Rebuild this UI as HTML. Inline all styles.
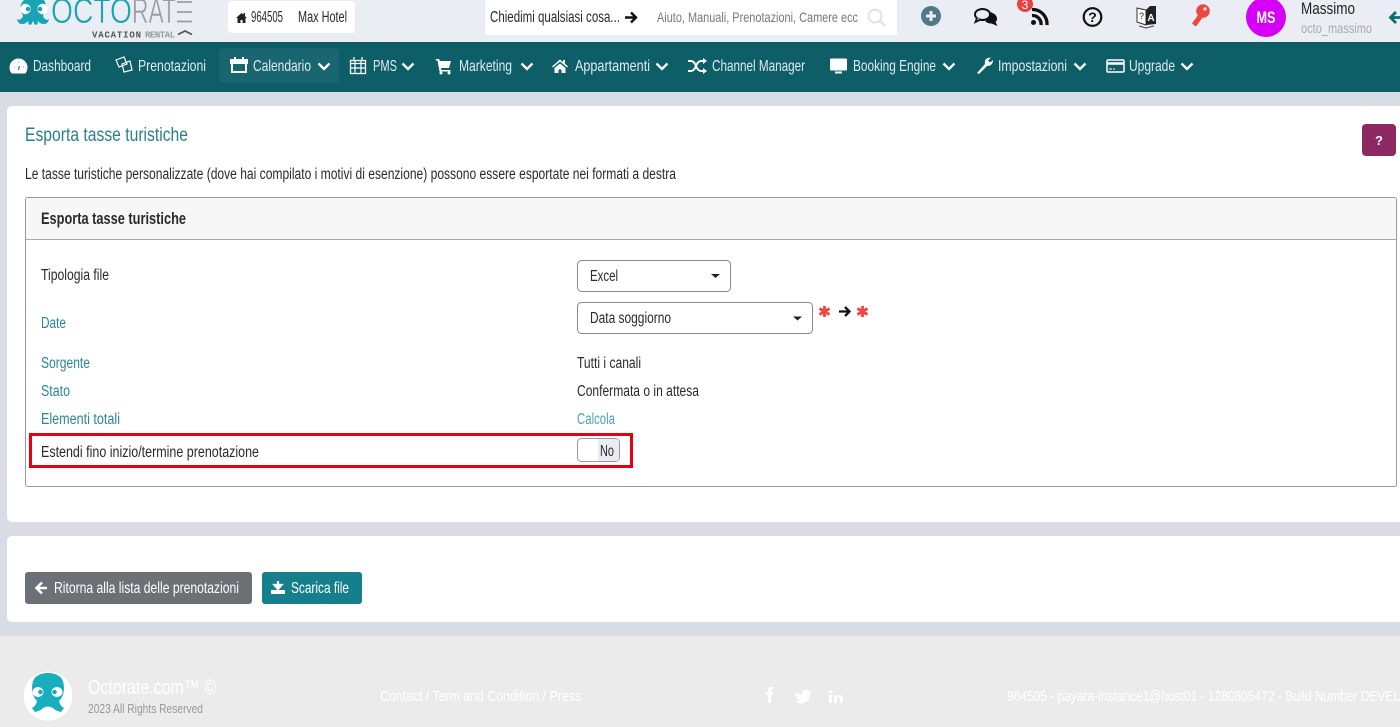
<!DOCTYPE html>
<html><head><meta charset="utf-8"><style>
html,body{margin:0;padding:0;background:#d9dce5}
svg{display:block;font-family:"Liberation Sans Narrow","Liberation Sans",sans-serif}
.n{fill:#dfecee;font-size:16px}
.d{fill:#2a2a2a;font-size:15.5px}
.t{fill:#2b8792;font-size:15.5px}
</style></head><body>
<svg width="1400" height="727" viewBox="0 0 1400 727" xmlns="http://www.w3.org/2000/svg">
<defs>
<path id="chev" d="M-5.500-2.500 0 3 5.500-2.500" fill="none" stroke="#fff" stroke-width="2.300"/>
</defs>
<rect width="1400" height="727" fill="#d9dce5"/>
<rect width="1400" height="42" fill="#eaedf3"/>
<rect y="42" width="1400" height="50" fill="#0e5e68"/>

<!-- logo -->
<path d="M24 0h20q3 5 1 11l-2 5q1 3 4 4l2-1q-1 5-5 5-4 0-6-3-1 2 0 3l-3 1-2-4-2 4-3-1q1-1 0-3-2 3-6 3-4 0-5-5l2 1q3-1 4-4l-2-5q-2-6 3-11z" fill="#17a5b5"/>
<circle cx="25.500" cy="9" r="5.200" fill="#fff"/><circle cx="42.500" cy="9" r="5.200" fill="#fff"/>
<circle cx="28" cy="9" r="2.300" fill="#17a5b5"/><circle cx="40" cy="9" r="2.300" fill="#17a5b5"/>
<text x="51" y="23" font-size="35" fill="#17a5b5" stroke="#eaedf3" stroke-width=".5" textLength="81" lengthAdjust="spacingAndGlyphs" style="font-family:'Liberation Sans'">OCTO</text>
<text x="132" y="23" font-size="35" fill="#9a9ea4" stroke="#eaedf3" stroke-width=".5" textLength="44" lengthAdjust="spacingAndGlyphs" style="font-family:'Liberation Sans'">RAT</text>
<path d="M177 2h15M177 12h15M177 21.500h15" stroke="#9a9ea4" stroke-width="1.800"/>
<text x="92" y="37.500" font-size="9" font-weight="700" fill="#555" textLength="49" lengthAdjust="spacing" style="font-family:'Liberation Mono'">VACATION</text>
<text x="145" y="37.500" font-size="9" font-weight="700" fill="#999" textLength="30" lengthAdjust="spacing" style="font-family:'Liberation Mono'">RENTAL</text>
<path d="M178 34.500l7-3.500 7 3.500" fill="none" stroke="#555" stroke-width="1.700"/>

<!-- hotel -->
<rect x="228" y="1" width="127" height="32" rx="4" fill="#fff"/>
<path d="M236 18l5.500-5 2 1.800V13h1.500v3.200l2 1.800h-1.500v5h-3v-3h-2v3h-3v-5z" fill="#222"/>
<text x="251" y="22" class="d" textLength="32" lengthAdjust="spacingAndGlyphs">964505</text>
<text x="298" y="22" class="d" textLength="49" lengthAdjust="spacingAndGlyphs">Max Hotel</text>

<!-- search -->
<rect x="485" y="0" width="412" height="35" fill="#fff"/>
<text x="490" y="22" class="d" textLength="130" lengthAdjust="spacingAndGlyphs">Chiedimi qualsiasi cosa...</text>
<path d="M625 17.500h10M631 12.500l5 5-5 5" fill="none" stroke="#111" stroke-width="2.400"/>
<text x="657" y="22" font-size="14" fill="#777" textLength="201" lengthAdjust="spacingAndGlyphs">Aiuto, Manuali, Prenotazioni, Camere ecc</text>
<circle cx="875" cy="16" r="6.500" fill="none" stroke="#dfe2e4" stroke-width="2"/>
<path d="M880 21l5 5" stroke="#dfe2e4" stroke-width="2.500"/>

<!-- top icons -->
<circle cx="931" cy="16" r="10" fill="#4f7a87"/>
<path d="M931 11v10M926 16h10" stroke="#eaedf3" stroke-width="3"/>
<path d="M990 12q7 2 7 7 0 2-1.500 3l2 4-6-2.500q-4 0-6-2z" fill="#111"/>
<ellipse cx="982.500" cy="14.500" rx="7.500" ry="5.500" fill="#eaedf3" stroke="#111" stroke-width="2"/>
<path d="M977 18l-1.500 4 5-2.500" fill="#eaedf3" stroke="#111" stroke-width="1.800"/>
<circle cx="1033.500" cy="22.500" r="2.500" fill="#111"/>
<path d="M1032 15.500a8.500 8.500 0 0 1 9 9.500M1032 9.500a14.500 14.500 0 0 1 15 15.500" fill="none" stroke="#111" stroke-width="3.300"/>
<circle cx="1025" cy="4" r="8" fill="#ea4040"/>
<text x="1025" y="9" font-size="12" fill="#fff" text-anchor="middle">3</text>
<circle cx="1092.500" cy="17" r="8.800" fill="none" stroke="#111" stroke-width="2.200"/>
<text x="1092.500" y="22" font-size="14" font-weight="700" fill="#111" text-anchor="middle" style="font-family:'Liberation Sans'">?</text>
<path d="M1137 8l9 2v15l-9-3z" fill="#fff" stroke="#333"/>
<path d="M1146 10l4-4 6 0v18l-10 1z" fill="#222"/>
<path d="M1139 26l7 2 8-2" fill="none" stroke="#444"/>
<text x="1151" y="21" font-size="10" font-weight="700" fill="#fff" text-anchor="middle">A</text>
<text x="1141.500" y="19" font-size="9" fill="#222" text-anchor="middle">?</text>
<path d="M1194 25l8-11" stroke="#ef4545" stroke-width="5"/>
<circle cx="1203" cy="11" r="6.800" fill="#ef4545"/><circle cx="1205" cy="9" r="1.600" fill="#eaedf3"/>

<circle cx="1266" cy="17" r="20" fill="#d500f5"/>
<text x="1256.500" y="23" font-size="17" fill="#fff" textLength="19" lengthAdjust="spacingAndGlyphs" font-weight="700">MS</text>
<text x="1301" y="14" font-size="17" fill="#222" textLength="54" lengthAdjust="spacingAndGlyphs">Massimo</text>
<text x="1301" y="33" font-size="14" fill="#aaa" textLength="71" lengthAdjust="spacingAndGlyphs">octo_massimo</text>
<path d="M1400 17.500h-9M1396 12l-5.500 5.500 5.500 5.500" fill="none" stroke="#0e6c78" stroke-width="2.800"/>

<!-- nav -->
<rect x="219" y="48" width="120" height="35" rx="3" fill="#1a6670"/>
<path d="M12 73a8.500 8.500 0 1 1 13 0z" fill="#fff" stroke="#fff"/><path d="M18.500 70l1-4M14 67h.5M23 67h.5M18.500 62v.5" stroke="#0e5e68" stroke-width="1"/>
<text x="33" y="71" class="n" textLength="58" lengthAdjust="spacingAndGlyphs">Dashboard</text>
<path d="M116 60l8-3 3 7-8 3zM122 64l8-3 2 9-8 2z" fill="none" stroke="#fff" stroke-width="1.200"/>
<text x="138" y="71" class="n" textLength="68" lengthAdjust="spacingAndGlyphs">Prenotazioni</text>
<rect x="232" y="60" width="14" height="12" fill="none" stroke="#fff" stroke-width="2"/><path d="M231 60h16v3h-16zM235 57v3M243 57v3" stroke="#fff" stroke-width="2" fill="#fff"/>
<text x="253" y="71" class="n" textLength="58" lengthAdjust="spacingAndGlyphs">Calendario</text>
<use href="#chev" x="324" y="66"/>
<rect x="350.500" y="60.500" width="15" height="13" fill="none" stroke="#fff" stroke-width="1.300"/><path d="M350 63.500h16M354 57v4M362 57v4M355 61v12M361 61v12M351 68h14" stroke="#fff" stroke-width="1.200" fill="none"/>
<text x="373" y="71" class="n" textLength="24" lengthAdjust="spacingAndGlyphs">PMS</text>
<use href="#chev" x="408" y="66"/>
<path d="M436 59h3l1 2h11l-2 7h-8l.5 2h9v1.500h-11l-2-11h-2z" fill="#fff"/><circle cx="441" cy="73" r="1.500" fill="#fff"/><circle cx="449" cy="73" r="1.500" fill="#fff"/>
<text x="459" y="71" class="n" textLength="53" lengthAdjust="spacingAndGlyphs">Marketing</text>
<use href="#chev" x="527" y="66"/>
<path d="M552 66.500l8-7 3 2.600V60h2v3.800l3 2.700-1 1-7-6-7 6zM554.500 68l5.500-4.500 5.500 4.500v5h-4v-3.500h-3V73h-4z" fill="#fff"/>
<text x="575" y="71" class="n" textLength="75" lengthAdjust="spacingAndGlyphs">Appartamenti</text>
<use href="#chev" x="662" y="66"/>
<path d="M688 61h3q3 0 5 5t5 5h3M688 71h3q3 0 5-5t5-5h3" fill="none" stroke="#fff" stroke-width="1.900"/><path d="M703 58l4 3-4 3zM703 68l4 3-4 3z" fill="#fff"/>
<text x="712" y="71" class="n" textLength="93" lengthAdjust="spacingAndGlyphs">Channel Manager</text>
<rect x="830" y="58.500" width="17" height="12" rx="1" fill="#fff"/><path d="M835 72.500h7" stroke="#fff" stroke-width="2"/>
<text x="853" y="71" class="n" textLength="83" lengthAdjust="spacingAndGlyphs">Booking Engine</text>
<use href="#chev" x="949" y="66"/>
<path d="M977 73l8-9q-1-5 3-6l3-.5-3 3 2 2 3-2.500q0 6-6 6l-8 8z" fill="#fff"/>
<text x="998" y="71" class="n" textLength="69" lengthAdjust="spacingAndGlyphs">Impostazioni</text>
<use href="#chev" x="1080" y="66"/>
<rect x="1107" y="60" width="17" height="12" rx="1" fill="none" stroke="#fff" stroke-width="1.500"/><path d="M1107 63.500h17" stroke="#fff" stroke-width="2.500"/><path d="M1109 69h3M1113 69h2" stroke="#fff"/>
<text x="1129" y="71" class="n" textLength="46" lengthAdjust="spacingAndGlyphs">Upgrade</text>
<use href="#chev" x="1187" y="66"/>

<!-- main card -->
<rect x="7" y="106" width="1420" height="416" rx="5" fill="#fff"/>
<text x="25" y="141" font-size="19" fill="#2b7f8a" textLength="163" lengthAdjust="spacingAndGlyphs">Esporta tasse turistiche</text>
<rect x="1362" y="124" width="34" height="32" rx="4" fill="#8e2862"/>
<text x="1379" y="145" font-size="13" font-weight="700" fill="#fff" text-anchor="middle" style="font-family:'Liberation Sans'">?</text>
<text x="25" y="179" class="d" textLength="651" lengthAdjust="spacingAndGlyphs">Le tasse turistiche personalizzate (dove hai compilato i motivi di esenzione) possono essere esportate nei formati a destra</text>

<rect x="25.500" y="197.500" width="1371" height="289" rx="2" fill="#fff" stroke="#999"/>
<path d="M26 198h1370v41H26z" fill="#f7f7f7"/>
<path d="M26 239.500h1370" stroke="#aaa"/>
<text x="41" y="224" font-size="17" font-weight="700" fill="#2a2a2a" textLength="145" lengthAdjust="spacingAndGlyphs">Esporta tasse turistiche</text>

<text x="41" y="280" class="d" textLength="68" lengthAdjust="spacingAndGlyphs">Tipologia file</text>
<rect x="577.500" y="260.500" width="153" height="31" rx="4" fill="#fff" stroke="#888"/>
<text x="590" y="281" class="d" textLength="28" lengthAdjust="spacingAndGlyphs">Excel</text>
<path d="M711 274h9l-4.500 4z" fill="#222"/>

<text x="41" y="328" class="t" textLength="25" lengthAdjust="spacingAndGlyphs">Date</text>
<rect x="577.500" y="302.500" width="235" height="31" rx="4" fill="#fff" stroke="#888"/>
<text x="590" y="323" class="d" textLength="81" lengthAdjust="spacingAndGlyphs">Data soggiorno</text>
<path d="M793 316.500h9l-4.500 4z" fill="#222"/>
<path d="M824.500 306v11M819.500 308.500l10 6M829.500 308.500l-10 6" stroke="#ef4545" stroke-width="2.800"/>
<path d="M839 311.500h9M845 307l4.500 4.500-4.500 4.500" fill="none" stroke="#111" stroke-width="2.300"/>
<path d="M862.500 306v11M857.500 308.500l10 6M867.500 308.500l-10 6" stroke="#ef4545" stroke-width="2.800"/>

<text x="41" y="368" class="t" textLength="49" lengthAdjust="spacingAndGlyphs">Sorgente</text>
<text x="577" y="368" class="d" textLength="64" lengthAdjust="spacingAndGlyphs">Tutti i canali</text>
<text x="41" y="396" class="t" textLength="29" lengthAdjust="spacingAndGlyphs">Stato</text>
<text x="577" y="396" class="d" textLength="122" lengthAdjust="spacingAndGlyphs">Confermata o in attesa</text>
<text x="41" y="424" class="t" textLength="79" lengthAdjust="spacingAndGlyphs">Elementi totali</text>
<text x="577" y="424" fill="#4aa3b0" font-size="15.500" textLength="38" lengthAdjust="spacingAndGlyphs">Calcola</text>

<rect x="30.500" y="434.500" width="601" height="32" fill="none" stroke="#e60012" stroke-width="3"/>
<text x="41" y="457" class="d" textLength="218" lengthAdjust="spacingAndGlyphs">Estendi fino inizio/termine prenotazione</text>
<rect x="577.500" y="438.500" width="42" height="23" rx="4" fill="#fff" stroke="#999"/>
<path d="M598 439h18a3 3 0 0 1 3 3v16a3 3 0 0 1-3 3h-18z" fill="#e9ecf2"/>
<text x="600" y="456" class="d" textLength="14" lengthAdjust="spacingAndGlyphs">No</text>

<!-- action card -->
<rect x="7" y="536" width="1420" height="86" rx="5" fill="#fff"/>
<rect x="25" y="572" width="227" height="32" rx="3" fill="#6b7177"/>
<path d="M47 588H36.500M42 582.500 36.500 588l5.500 5.500" fill="none" stroke="#fff" stroke-width="2.600"/>
<text x="54" y="593" font-size="16" fill="#fff" textLength="185" lengthAdjust="spacingAndGlyphs">Ritorna alla lista delle prenotazioni</text>
<rect x="262" y="572" width="100" height="32" rx="3" fill="#167f8c"/>
<path d="M278 581v6M274.500 585l3.500 4 3.500-4z" stroke="#fff" stroke-width="2.200" fill="#fff"/><path d="M271 590h14v4h-14z" fill="#fff"/>
<text x="291" y="593" font-size="16" fill="#fff" textLength="58" lengthAdjust="spacingAndGlyphs">Scarica file</text>

<!-- footer -->
<rect y="636" width="1400" height="91" fill="#ebebeb"/>
<circle cx="48" cy="696" r="24.500" fill="#fff"/>
<path d="M32 688q0-15 16-15t16 15q0 8-5 13 1 5 5 7l-3 4q-5-1-8-4-5-3-10 0-3 3-8 4l-3-4q4-2 5-7-5-5-5-13z" fill="#17aebf"/>
<ellipse cx="38" cy="692" rx="5.500" ry="5" fill="#fff"/><ellipse cx="57" cy="692" rx="5.500" ry="5" fill="#fff"/>
<circle cx="40.500" cy="692" r="2.300" fill="#17aebf"/><circle cx="54.500" cy="692" r="2.300" fill="#17aebf"/>
<text x="88" y="694" font-size="20" fill="#fff" textLength="128" lengthAdjust="spacingAndGlyphs">Octorate.com™ ©</text>
<text x="88" y="713" font-size="13" fill="#999" textLength="115" lengthAdjust="spacingAndGlyphs">2023 All Rights Reserved</text>
<text x="380" y="701" font-size="15" fill="#fff" textLength="201" lengthAdjust="spacingAndGlyphs">Contact / Term and Condition / Press</text>
<path d="M768 703v-8h-2v-3h2v-2q0-3 3.500-3h1.500v3h-1q-1 0-1 1v1h2l-.5 3h-1.500v8z" fill="#fff"/>
<path d="M795 692q3 3 7 3 0-5 4-5 2 0 3 1l2-1-1 2 2-.5-2 2q0 9-9 10-4 0-6-2 3 0 5-1.500-4-1-4-3h2q-3-1-3-4l2 .5q-3-2-2-2z" fill="#fff"/>
<path d="M829 695h3v8h-3zM834 695h3v1q3-2 5 0 1 1 1 3v4h-3v-4q0-2-1.500-2t-1.500 2v4h-3z" fill="#fff"/><circle cx="830.500" cy="692" r="1.700" fill="#fff"/>
<text x="1007" y="701" font-size="15" fill="#fff" textLength="393" lengthAdjust="spacingAndGlyphs">964505 - payara-instance1@host01 - 1280805472 - Build Number DEVEL</text>
</svg>
</body></html>
